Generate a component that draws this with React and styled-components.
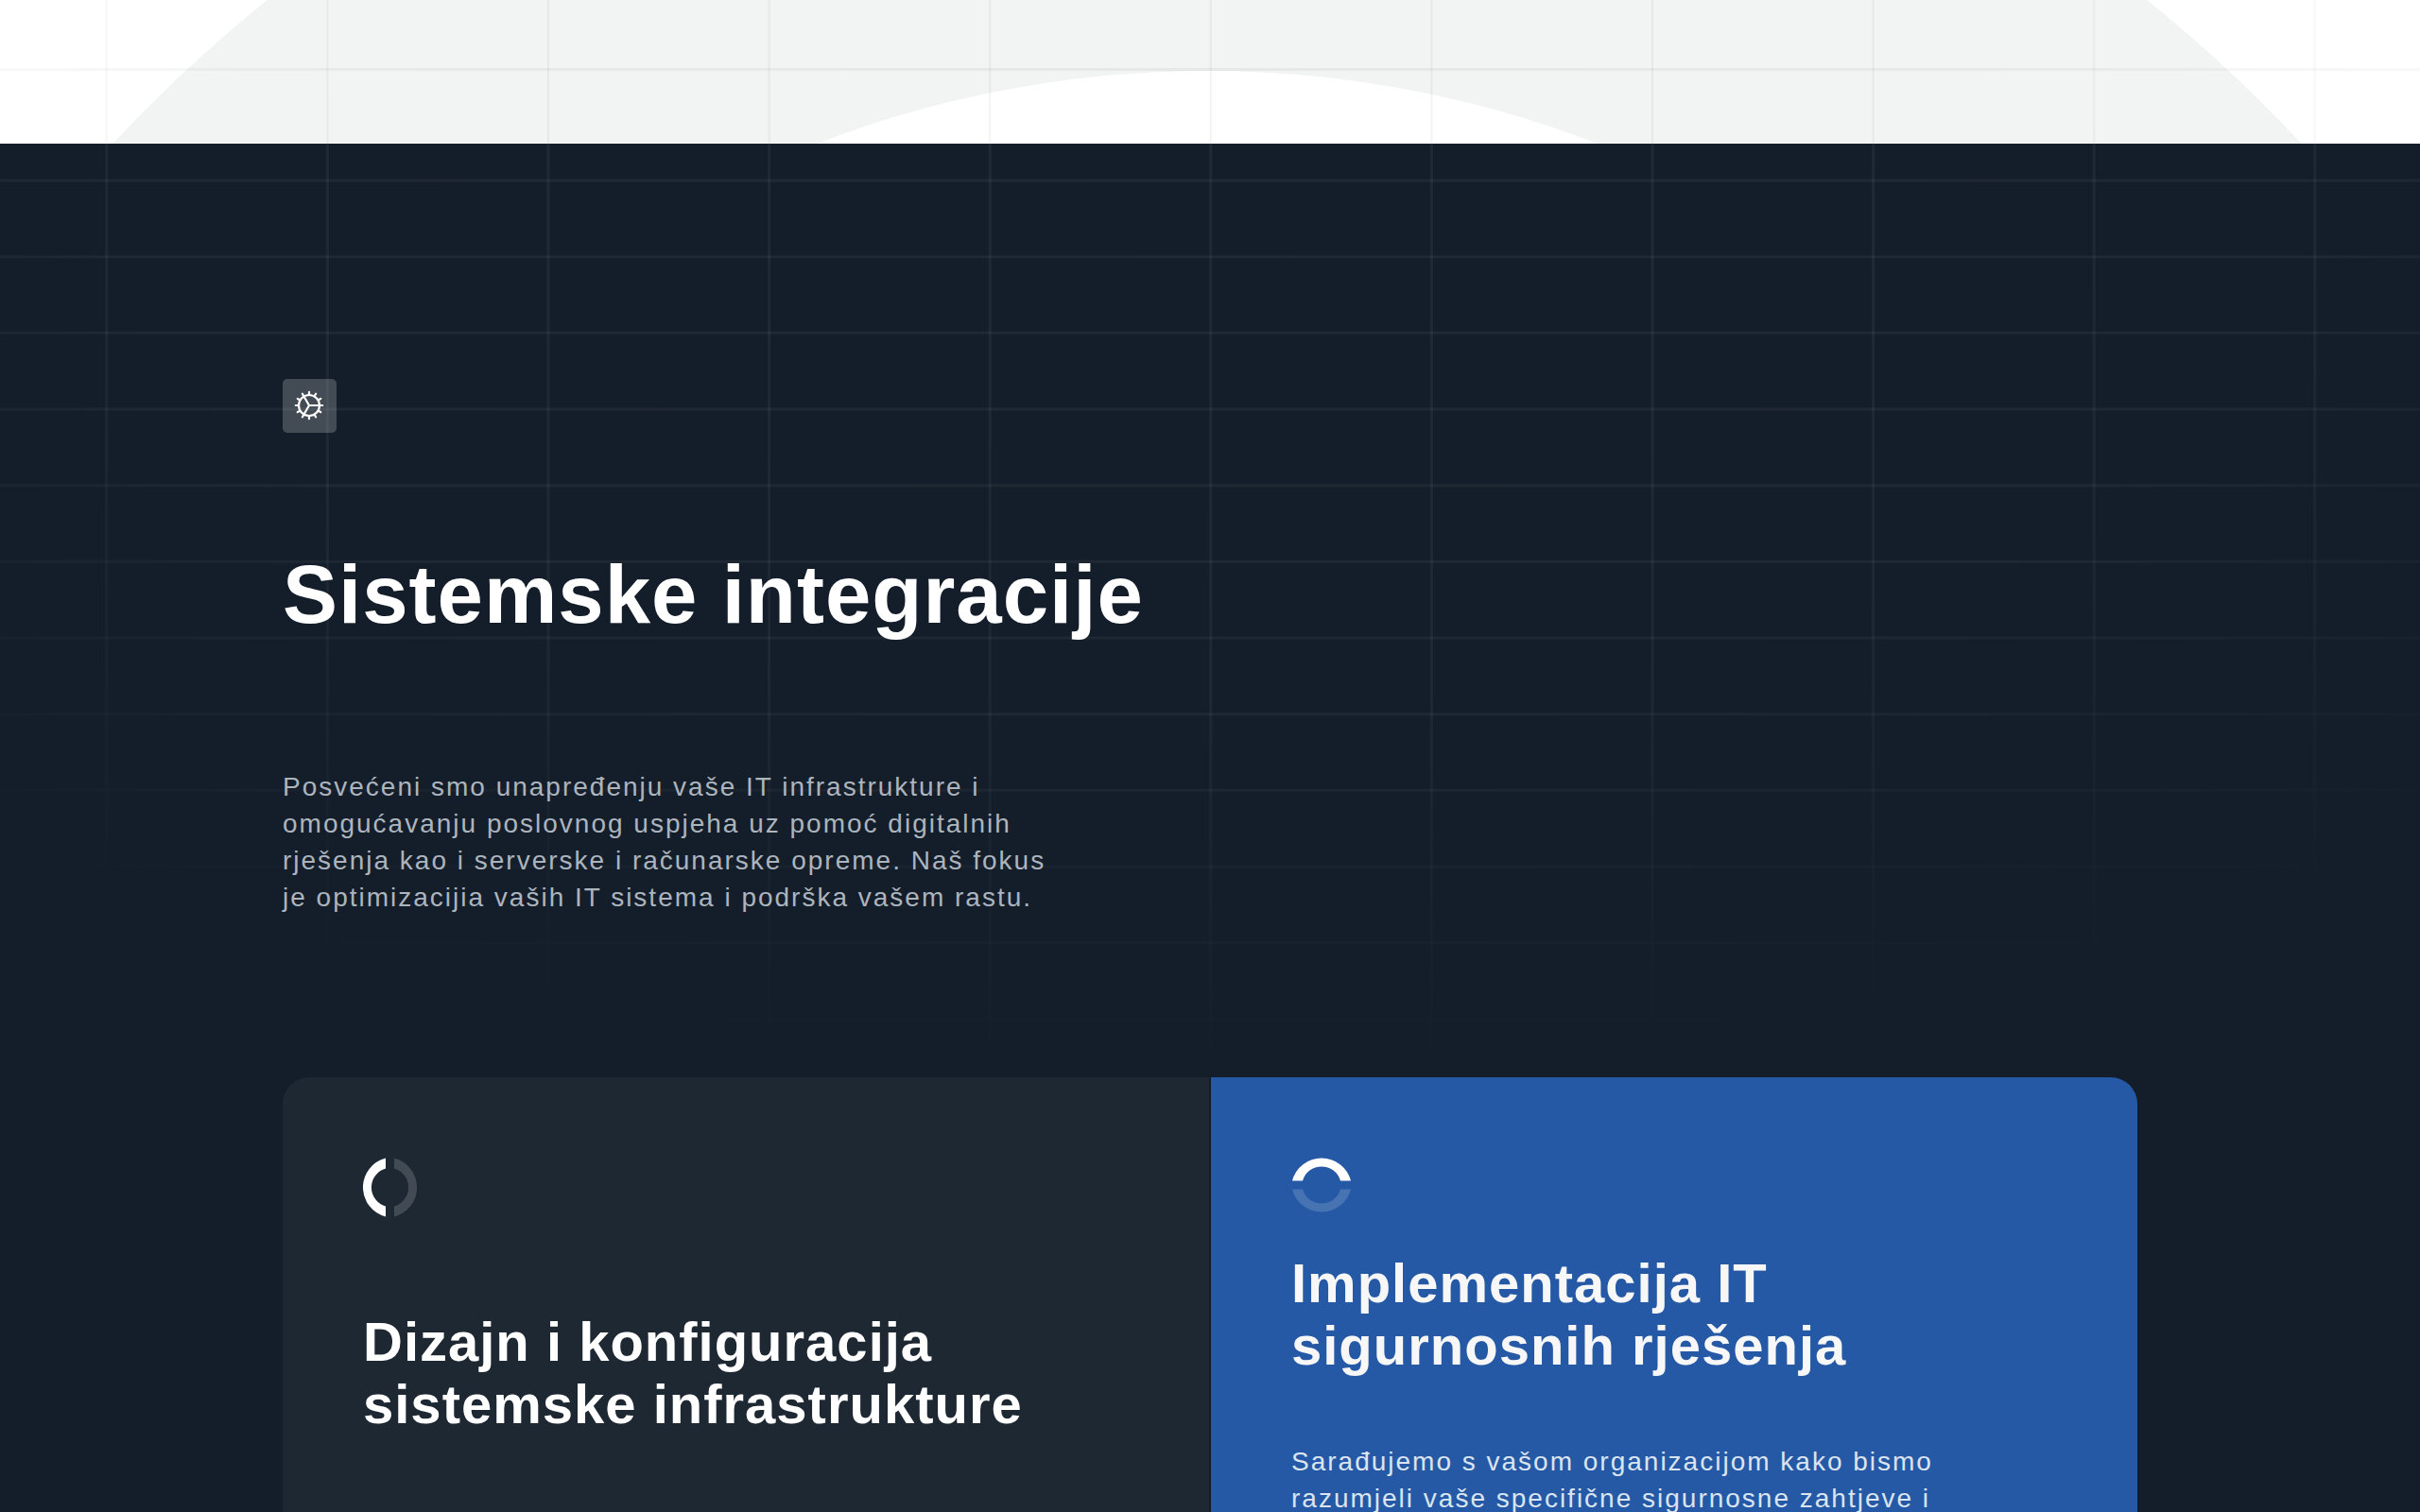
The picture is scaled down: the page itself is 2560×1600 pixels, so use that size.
import styled, { createGlobalStyle } from 'styled-components'

const COLUMN = 233.6
const ROW = 80.67

const columns = Array.from({ length: 11 }, (_, i) => 112.8 + i * COLUMN)
const rows = Array.from({ length: 12 }, (_, i) => 39 + i * ROW)

const teeth = Array.from({ length: 12 }, (_, i) => i * 30)

function Backdrop() {
    return (
        <Drawing viewBox="0 0 2560 152" preserveAspectRatio="xMidYMin slice" aria-hidden="true">
            <defs>
                <radialGradient id="lightFade" gradientUnits="userSpaceOnUse" cx="1281" cy="0" r="1600">
                    <stop offset="0" stopColor="#000" stopOpacity="0.05" />
                    <stop offset="0.5" stopColor="#000" stopOpacity="0.045" />
                    <stop offset="1" stopColor="#000" stopOpacity="0.015" />
                </radialGradient>
            </defs>
            <circle cx="1277" cy="1233" r="1584" fill="#f2f4f3" />
            <circle cx="1277" cy="1220" r="1145" fill="#fff" />
            <g stroke="url(#lightFade)" strokeWidth="2">
                {columns.map(x => (
                    <path key={x} d={`M${x} 0 L${x + 0.01} 152`} />
                ))}
                <path d="M0 73.5 L2560 73.51" strokeWidth="3" />
            </g>
        </Drawing>
    )
}

function GridLines() {
    return (
        <Drawing viewBox="0 0 2560 960" preserveAspectRatio="xMidYMin slice" aria-hidden="true">
            <defs>
                <radialGradient
                    id="darkFade"
                    gradientUnits="userSpaceOnUse"
                    cx="0"
                    cy="0"
                    r="1"
                    gradientTransform="translate(1281 0) scale(2000 990)"
                >
                    <stop offset="0" stopColor="#fff" stopOpacity="0.05" />
                    <stop offset="0.6" stopColor="#fff" stopOpacity="0.045" />
                    <stop offset="1" stopColor="#fff" stopOpacity="0" />
                </radialGradient>
            </defs>
            <g stroke="url(#darkFade)" strokeWidth="3">
                {columns.map(x => (
                    <path key={x} d={`M${x} 0 L${x + 0.01} 960`} />
                ))}
                {rows.map(y => (
                    <path key={y} d={`M0 ${y} L2560 ${y + 0.01}`} />
                ))}
            </g>
        </Drawing>
    )
}

function GearIcon() {
    return (
        <svg width="32" height="32" viewBox="0 0 32 32" fill="none" stroke="#fff" strokeWidth="2.2" strokeLinecap="round" aria-hidden="true">
            <circle cx="16" cy="16" r="11" />
            <path d="M16 16H27M16 16L10.5 6.5M16 16L10.5 25.5" />
            {teeth.map(angle => (
                <path key={angle} d="M16 4.5V1.8" transform={`rotate(${angle} 16 16)`} />
            ))}
        </svg>
    )
}

function SplitRing({ horizontal }) {
    if (horizontal) {
        return (
            <svg width="64" height="58" viewBox="0 0 64 58" aria-hidden="true">
                <path d="M1 24.5A32 32 0 0 1 63 24.5H52A20.8 20.8 0 0 0 12 24.5Z" fill="#fff" />
                <path d="M1 33.5A32 32 0 0 0 63 33.5H52A20.8 20.8 0 0 1 12 33.5Z" fill="#fff" opacity="0.16" />
            </svg>
        )
    }
    return (
        <svg width="58" height="64" viewBox="0 0 58 64" aria-hidden="true">
            <path d="M24 0.5A32 32 0 0 0 24 62.5V51.5A20.8 20.8 0 0 1 24 11.5Z" fill="#fff" />
            <path d="M33 0.5A32 32 0 0 1 33 62.5V51.5A20.8 20.8 0 0 0 33 11.5Z" fill="#fff" opacity="0.16" />
        </svg>
    )
}

export default function App() {
    return (
        <Page>
            <GlobalStyle />
            <Intro>
                <Backdrop />
            </Intro>
            <Services>
                <GridLines />
                <Container>
                    <Badge>
                        <GearIcon />
                    </Badge>
                    <Title>Sistemske integracije</Title>
                    <Lead>
                        Posvećeni smo unapređenju vaše IT infrastrukture i omogućavanju poslovnog uspjeha uz pomoć
                        digitalnih rješenja kao i serverske i računarske opreme. Naš fokus je optimizacijia vaših IT
                        sistema i podrška vašem rastu.
                    </Lead>
                    <Cards>
                        <Card>
                            <IconSlot>
                                <SplitRing />
                            </IconSlot>
                            <CardTitle $spaced>Dizajn i konfiguracija sistemske infrastrukture</CardTitle>
                        </Card>
                        <Card $active>
                            <IconSlot>
                                <SplitRing horizontal />
                            </IconSlot>
                            <CardTitle>Implementacija IT sigurnosnih rješenja</CardTitle>
                            <CardText>
                                Sarađujemo s vašom organizacijom kako bismo razumjeli vaše specifične sigurnosne
                                zahtjeve i
                            </CardText>
                        </Card>
                    </Cards>
                </Container>
            </Services>
        </Page>
    )
}

const GlobalStyle = createGlobalStyle`
    *, *::before, *::after {
        box-sizing: border-box;
    }

    body {
        margin: 0;
        background-color: #141e2a;
        font-family: "Liberation Sans", Arial, sans-serif;
    }

    h1, h2, p {
        margin: 0;
    }
`

const Page = styled.main`
    display: flex;
    flex-direction: column;
    height: 100vh;
    overflow: hidden;
`

const Drawing = styled.svg`
    position: absolute;
    top: 0;
    left: 0;
    width: 100%;
    display: block;
`

const Intro = styled.header`
    position: relative;
    flex: none;
    height: 152px;
    overflow: hidden;
    background-color: #fff;
`

const Services = styled.section`
    position: relative;
    flex: 1;
    display: flex;
    padding: 249px 299px 0;
    background-color: #141e2a;
`

const Container = styled.div`
    position: relative;
    flex: 1;
    display: flex;
    flex-direction: column;
`

const Badge = styled.div`
    width: 57px;
    height: 57px;
    padding: 12px;
    border-radius: 5px;
    background-color: rgba(255, 255, 255, .2);
`

const Title = styled.h1`
    margin-top: 119px;
    font-size: 87px;
    line-height: 104px;
    letter-spacing: 1px;
    color: #fff;
`

const Lead = styled.p`
    max-width: 820px;
    margin-top: 132px;
    font-size: 28px;
    line-height: 39px;
    letter-spacing: 2px;
    color: #acb4be;
`

const Cards = styled.div`
    flex: 1;
    display: grid;
    grid-template-columns: 1fr 1fr;
    column-gap: 2px;
    margin-top: 171px;
    border-radius: 28px 28px 0 0;
    overflow: hidden;
`

const Card = styled.article`
    padding: 85px 85px 0;
    background-color: ${({ $active }) => ($active ? '#2559a5' : '#1e2833')};
    color: ${({ $active }) => ($active ? '#f7f7f8' : '#fff')};
`

const IconSlot = styled.div`
    height: 64px;
`

const CardTitle = styled.h2`
    max-width: 740px;
    margin-top: ${({ $spaced }) => ($spaced ? '98px' : '36px')};
    font-size: 58px;
    line-height: 66px;
    letter-spacing: 1px;
`

const CardText = styled.p`
    max-width: 720px;
    margin-top: 70px;
    font-size: 28px;
    line-height: 39px;
    letter-spacing: 2px;
    color: #dbe4f1;
`
